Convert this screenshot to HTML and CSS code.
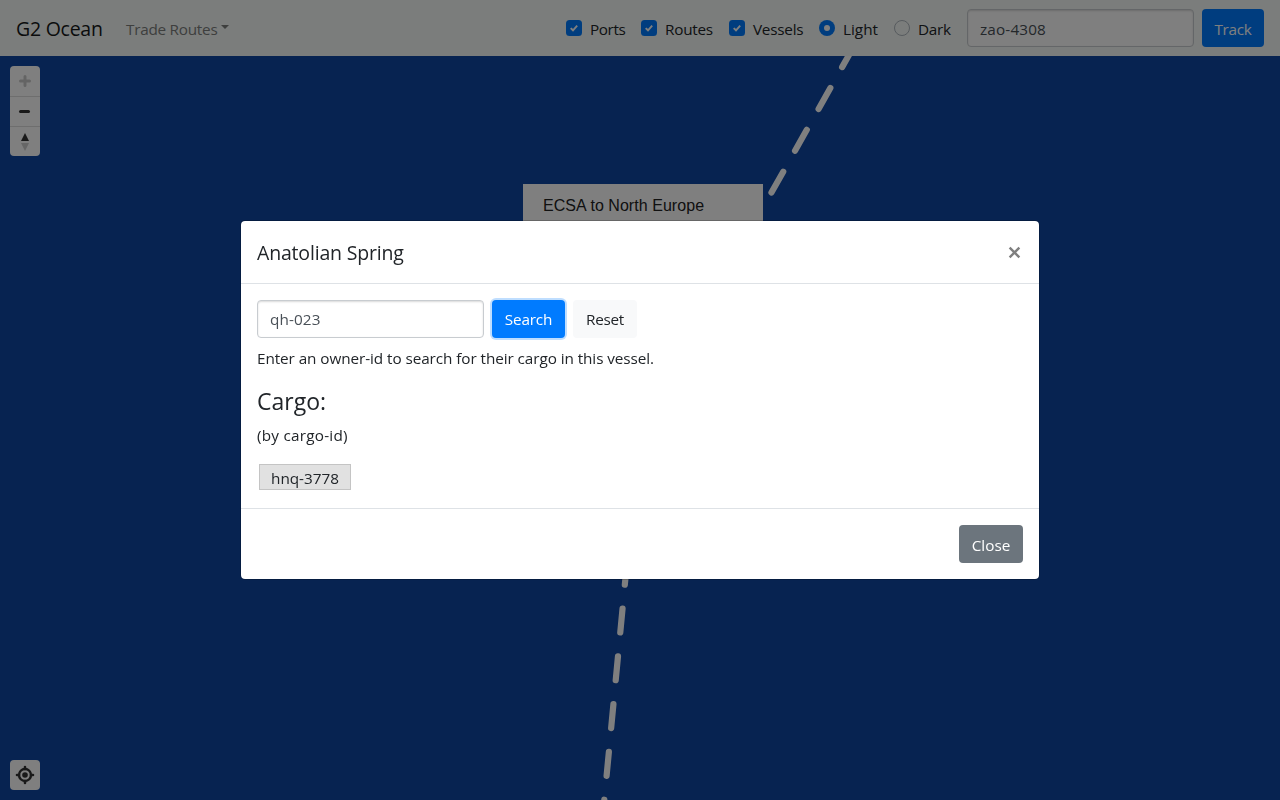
FILE: index.html
```html
<!DOCTYPE html>
<html lang="en">
<head>
<meta charset="utf-8">
<title>G2 Ocean</title>
<link rel="stylesheet" href="styles.css">
</head>
<body>
<div class="app">
  <nav class="navbar">
    <a class="brand"><span>G2 Ocean</span></a>
    <a class="nav-link"><span>Trade Routes</span><i class="caret"></i></a>
    <form class="filters">
      <label class="opt ports"><svg class="box" viewBox="0 0 16 16"><rect width="16" height="16" rx="3.5" fill="#007bff"/><path d="M4.7 8.1l2.3 2.2 4.2-4.6" fill="none" stroke="#fff" stroke-width="1.9"/></svg><span>Ports</span></label>
      <label class="opt routes"><svg class="box" viewBox="0 0 16 16"><rect width="16" height="16" rx="3.5" fill="#007bff"/><path d="M4.7 8.1l2.3 2.2 4.2-4.6" fill="none" stroke="#fff" stroke-width="1.9"/></svg><span>Routes</span></label>
      <label class="opt vessels"><svg class="box" viewBox="0 0 16 16"><rect width="16" height="16" rx="3.5" fill="#007bff"/><path d="M4.7 8.1l2.3 2.2 4.2-4.6" fill="none" stroke="#fff" stroke-width="1.9"/></svg><span>Vessels</span></label>
      <label class="opt light"><svg class="box" viewBox="0 0 16 16"><circle cx="8" cy="8" r="8" fill="#007bff"/><circle cx="8" cy="8" r="3" fill="#fff"/></svg><span>Light</span></label>
      <label class="opt dark"><svg class="box" viewBox="0 0 16 16"><circle cx="8" cy="8" r="7.5" fill="none" stroke="#adb5bd"/></svg><span>Dark</span></label>
      <div class="field"><span class="track-id">zao-4308</span></div>
      <button type="button" class="btn primary track"><span>Track</span></button>
    </form>
  </nav>
  <main class="map">
    <svg class="route" viewBox="0 56 1280 744" width="1280" height="744">
      <g fill="none" stroke="#fff" stroke-width="6.2" stroke-linecap="round" stroke-dasharray="24 24">
        <path d="M853.9 46.2L760.3 212.4L754 224"/>
        <path d="M627.1 560.8L600 845"/>
      </g>
    </svg>
    <div class="controls">
      <div class="ctl"><svg viewBox="0 0 30 30"><path d="M15 10.5v9M10.5 15h9" stroke="#c9c9c9" stroke-width="3" stroke-linecap="round"/></svg></div>
      <div class="ctl"><svg viewBox="0 0 30 30"><path d="M10.5 14.5h8" stroke="#333" stroke-width="3" stroke-linecap="round"/></svg></div>
      <div class="ctl"><svg viewBox="0 0 30 30"><path d="M11 14l4-8 4 8z" fill="#333"/><path d="M11 16l4 8 4-8z" fill="#ccc"/></svg></div>
    </div>
    <div class="locate"><svg viewBox="0 0 30 30"><circle cx="15" cy="15" r="6" fill="none" stroke="#333" stroke-width="2.4"/><circle cx="15" cy="15" r="2.8" fill="#333"/><path d="M15 7v2M15 21v2M7 15h2M21 15h2" stroke="#333" stroke-width="2.6" stroke-linecap="round"/></svg></div>
    <div class="popup">ECSA to North Europe</div>
  </main>
</div>
<div class="backdrop">
  <section class="modal">
    <header class="modal-head">
      <h5><span>Anatolian Spring</span></h5>
      <svg class="dismiss" viewBox="0 0 12 12"><path d="M1.5 1.5l9 9M10.5 1.5l-9 9" stroke="#7f7f7f" stroke-width="2.2"/></svg>
    </header>
    <div class="modal-body">
      <div class="search-row">
        <div class="field"><span class="owner-id">qh-023</span></div>
        <button type="button" class="btn primary search"><span>Search</span></button>
        <button type="button" class="btn reset"><span>Reset</span></button>
      </div>
      <p class="hint"><span>Enter an owner-id to search for their cargo in this vessel.</span></p>
      <h4><span>Cargo:</span></h4>
      <p class="by"><span>(by cargo-id)</span></p>
      <div class="tag"><span>hnq-3778</span></div>
    </div>
    <footer class="modal-foot">
      <button type="button" class="btn close"><span>Close</span></button>
    </footer>
  </section>
</div>
</body>
</html>
```
FILE: styles.css
```css
* { box-sizing: border-box; }
body {
  margin: 0;
  width: 1280px;
  height: 800px;
  overflow: hidden;
  font: 15.3px/24px "Open Sans", "Noto Sans", sans-serif;
  color: #212529;
}
span { white-space: nowrap; }
h4, h5, p { margin: 0; font-weight: 400; }
.app { height: 800px; display: flex; flex-direction: column; }

.navbar {
  height: 56px;
  padding: 0 16px;
  display: flex;
  align-items: center;
  background: #f7fbf8;
}
.brand { width: 110px; font-size: 19.5px; letter-spacing: -.25px; line-height: 30px; padding-top: 2px; color: #16181a; }
.nav-link { display: flex; align-items: center; color: #7c7e7d; padding-top: 1px; letter-spacing: -.25px; }
.caret {
  margin: -3px 0 0 4px;
  border: 4.5px solid transparent;
  border-top-color: #7c7e7d;
  border-bottom: 0;
}
.filters { margin-left: auto; display: flex; align-items: center; }
.opt { display: flex; align-items: center; gap: 8px; letter-spacing: -.25px; }
.opt span { padding-top: 2px; }
.box { width: 16px; height: 16px; flex: none; }
.ports { width: 75px; letter-spacing: -.4px; }
.routes { width: 88px; }
.vessels { width: 90px; }
.light { width: 75px; letter-spacing: 0; }
.dark { width: 73px; }

.field {
  width: 227px;
  height: 38px;
  padding: 7px 12px 5px;
  border: 1px solid #c8ccd0;
  border-radius: 4px;
  background: #fff;
  color: #495057;
  box-shadow: inset 0 1px 2px rgba(0, 0, 0, .15);
}
.track-id { letter-spacing: .15px; }
.owner-id { letter-spacing: .1px; }
.btn {
  height: 38px;
  padding: 2px 0 0;
  border: 0;
  border-radius: 4px;
  margin-left: 8px;
  font: inherit;
  color: #fff;
  text-align: center;
}
.primary { background: #007bff; }
.track { width: 62px; letter-spacing: -.3px; }
.search-row .field { padding-top: 6px; }
.search-row .btn { padding-top: 0; }
.search { width: 73px; letter-spacing: -.15px; box-shadow: 0 0 0 2px #bfdeff; }
.reset { width: 64px; letter-spacing: -.3px; background: #f8f9fa; color: #212529; }
.close { width: 64px; background: #6c757d; }

.map { position: relative; flex: 1; background: #0e46a2; }
.route { display: block; }
.controls, .locate {
  position: absolute;
  left: 10px;
  width: 30px;
  border-radius: 4px;
  background: #fff;
  overflow: hidden;
}
.controls { top: 10px; height: 90px; }
.locate { bottom: 10px; height: 30px; }
.ctl { height: 30px; }
.ctl + .ctl { border-top: 1px solid #ddd; }
.ctl svg, .locate svg { display: block; width: 30px; height: 30px; }
.popup {
  position: absolute;
  left: 523px;
  top: 128px;
  width: 240px;
  height: 80px;
  padding: 10px 20px;
  background: #fff;
  color: #222;
  font: 16px/24px "Liberation Sans", Arial, sans-serif;
  letter-spacing: .05px;
}

.backdrop {
  position: fixed;
  inset: 0;
  display: flex;
  align-items: center;
  justify-content: center;
  background: rgba(0, 0, 0, .5);
}
.modal {
  width: 800px;
  border: 1px solid rgba(0, 0, 0, .2);
  border-radius: 5px;
  background: #fff;
  background-clip: padding-box;
}
.modal-head {
  height: 63px;
  padding: 0 18px 0 16px;
  display: flex;
  align-items: center;
  justify-content: space-between;
  border-bottom: 1px solid #dee2e6;
}
h5 { font-size: 19.5px; letter-spacing: -.18px; line-height: 30px; padding-top: 2px; }
.dismiss { width: 13px; height: 13px; }
.modal-body { height: 224px; padding: 16px; }
.search-row { display: flex; }
.hint { padding-top: 8px; height: 47px; letter-spacing: -.075px; }
h4 { font-size: 23px; line-height: 29px; padding-top: 2px; height: 37px; }
.by { padding-top: 1px; height: 43px; letter-spacing: .23px; }
.tag {
  width: 92px;
  height: 26px;
  margin: -1px 0 0 2px;
  padding-left: 11px;
  border: 1px solid #c4c4c4;
  background: #e1e1e1;
  line-height: 27px;
}
.modal-foot {
  height: 71px;
  padding: 16px;
  display: flex;
  justify-content: flex-end;
  border-top: 1px solid #dee2e6;
}
```
